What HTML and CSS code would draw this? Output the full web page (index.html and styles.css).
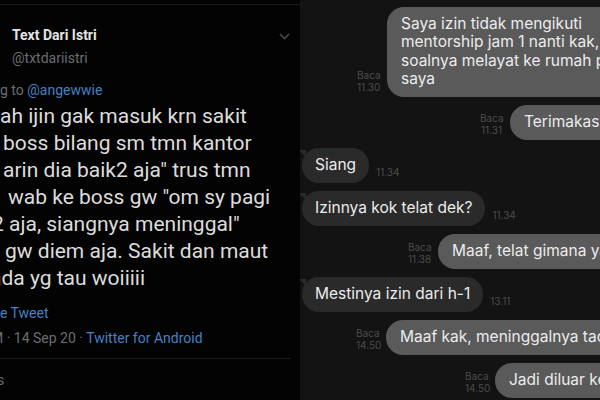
FILE: index.html
```html
<!DOCTYPE html>
<html lang="id">
<head>
    <meta charset="UTF-8">
    <meta name="viewport" content="width=device-width, initial-scale=1.0">
    <title>Text Dari Istri</title>
    <link rel="stylesheet" href="styles.css">
</head>
<body>
    <div class="page">
        <section class="tweet">
            <div class="tweet-rule"></div>
            <div class="tweet-head">
                <div class="author">
                    <div class="author-name">Text Dari Istri</div>
                    <div class="author-handle">@txtdariistri</div>
                </div>
                <svg class="chevron" width="11" height="7" viewBox="0 0 11 7">
                    <polyline points="1,1 5.5,5.5 10,1" fill="none" stroke="#4a4a4a" stroke-width="1.6"/>
                </svg>
            </div>
            <div class="reply-to">g to <span class="link">@angewwie</span></div>

            <div class="tweet-body">
                <div class="ln">ah ijin gak masuk krn sakit</div>
                <div class="ln in-3">boss bilang sm tmn kantor</div>
                <div class="ln in-3">arin dia baik2 aja" trus tmn</div>
                <div class="ln in-8">wab ke boss gw "om sy pagi</div>
                <div class="ln out-8">2 aja, siangnya meninggal"</div>
                <div class="ln in-5">gw diem aja. Sakit dan maut</div>
                <div class="ln out-10">ada yg tau woiiiii</div>
            </div>

            <div class="tweet-more">e Tweet</div>
            <div class="tweet-meta">M · 14 Sep 20 · <span class="link">Twitter for Android</span></div>
            <div class="tweet-rule-bottom"></div>
            <div class="tweet-stats">s</div>
        </section>

        <section class="chat">
            <div class="msg sent s1">
                <div class="meta">Baca<br>11.30</div>
                <div class="bubble">Saya izin tidak mengikuti<br>mentorship jam 1 nanti kak,<br>soalnya melayat ke rumah pembina<br>saya</div>
            </div>
            <div class="msg sent s2">
                <div class="meta">Baca<br>11.31</div>
                <div class="bubble">Terimakasih kak</div>
            </div>
            <div class="msg received">
                <div class="bubble">Siang</div>
                <div class="time">11.34</div>
            </div>
            <div class="msg received">
                <div class="bubble">Izinnya kok telat dek?</div>
                <div class="time">11.34</div>
            </div>
            <div class="msg sent s5">
                <div class="meta">Baca<br>11.38</div>
                <div class="bubble">Maaf, telat gimana ya kak?</div>
            </div>
            <div class="msg received">
                <div class="bubble">Mestinya izin dari h-1</div>
                <div class="time">13.11</div>
            </div>
            <div class="msg sent s7">
                <div class="meta">Baca<br>14.50</div>
                <div class="bubble">Maaf kak, meninggalnya tadi pagi</div>
            </div>
            <div class="msg sent s8">
                <div class="meta">Baca<br>14.50</div>
                <div class="bubble">Jadi diluar kendali saya</div>
            </div>
        </section>
    </div>
</body>
</html>
```

FILE: styles.css
```css
body {
    margin: 0;
    background: #131313;
}
.page {
    display: flex;
    width: 600px;
    height: 400px;
    overflow: hidden;
}

/* tweet (left) */
.tweet {
    width: 300px;
    flex: none;
    background: #030303;
    overflow: hidden;
    font-family: Roboto, "Liberation Sans", sans-serif;
    white-space: nowrap;
}
.tweet-rule {
    height: 4px;
    border-bottom: 1px solid #1c1c1c;
}
.tweet-head {
    display: flex;
    justify-content: space-between;
    padding: 20px 10px 0 12px;
}
.author-name {
    font-size: 14px;
    font-weight: 700;
    line-height: 20px;
    color: #e4e4e4;
}
.author-handle {
    margin-top: 3px;
    font-size: 14px;
    line-height: 20px;
    color: #6a6e72;
}
.chevron {
    margin-top: 8px;
}
.reply-to {
    margin-top: 12px;
    font-size: 14px;
    line-height: 20px;
    color: #6a6e72;
}
.link {
    color: #4581c3;
}
.tweet-body {
    margin-top: 3px;
    font-size: 21px;
    line-height: 27px;
    color: #dcdcdc;
}
.in-3 { text-indent: 3px; }
.in-5 { text-indent: 5px; }
.in-8 { text-indent: 8px; }
.out-8 { text-indent: -8px; }
.out-10 { text-indent: -10px; }
.tweet-more {
    margin-top: 11px;
    font-size: 14px;
    line-height: 20px;
    color: #4581c3;
}
.tweet-meta {
    margin-top: 5px;
    font-size: 14px;
    line-height: 20px;
    color: #6a6e72;
    text-indent: -9px;
}
.tweet-rule-bottom {
    margin: 10px 10px 0 0;
    border-top: 1px solid #1c1c1c;
}
.tweet-stats {
    margin-top: 11px;
    font-size: 14px;
    line-height: 20px;
    color: #6a6e72;
    text-indent: -3px;
}

/* chat (right) */
.chat {
    flex: none;
    width: 300px;
    padding-top: 6.5px;
    display: flex;
    flex-direction: column;
    gap: 8.5px;
    overflow: hidden;
    font-family: Inter, "Noto Sans", sans-serif;
}
.msg {
    display: flex;
    align-items: flex-end;
    gap: 7px;
}
.bubble {
    flex: none;
    padding: 8px 14px;
    font-size: 15.5px;
    line-height: 18.5px;
    color: #ececec;
    border-radius: 17px;
    white-space: nowrap;
}
.sent .bubble {
    background: #5a5a5b;
}
.received .bubble {
    position: relative;
    margin-left: 2px;
    padding: 8px 13px;
    background: #2a2a2a;
}
.received .bubble::before {
    content: "";
    position: absolute;
    left: -3px;
    top: 2px;
    border-top: 7px solid #2a2a2a;
    border-left: 7px solid transparent;
}
.meta {
    flex: none;
    width: 23px;
    padding-bottom: 3px;
    font-size: 10px;
    line-height: 12.5px;
    color: #4b4b4b;
    text-align: center;
}
.time {
    padding-bottom: 4px;
    font-size: 10px;
    line-height: 12.5px;
    color: #4b4b4b;
}
.s1 { margin-left: 57px; }
.s2 { margin-left: 180px; }
.s5 { margin-left: 108px; }
.s7 { margin-left: 56px; }
.s8 { margin-left: 165px; }
```
